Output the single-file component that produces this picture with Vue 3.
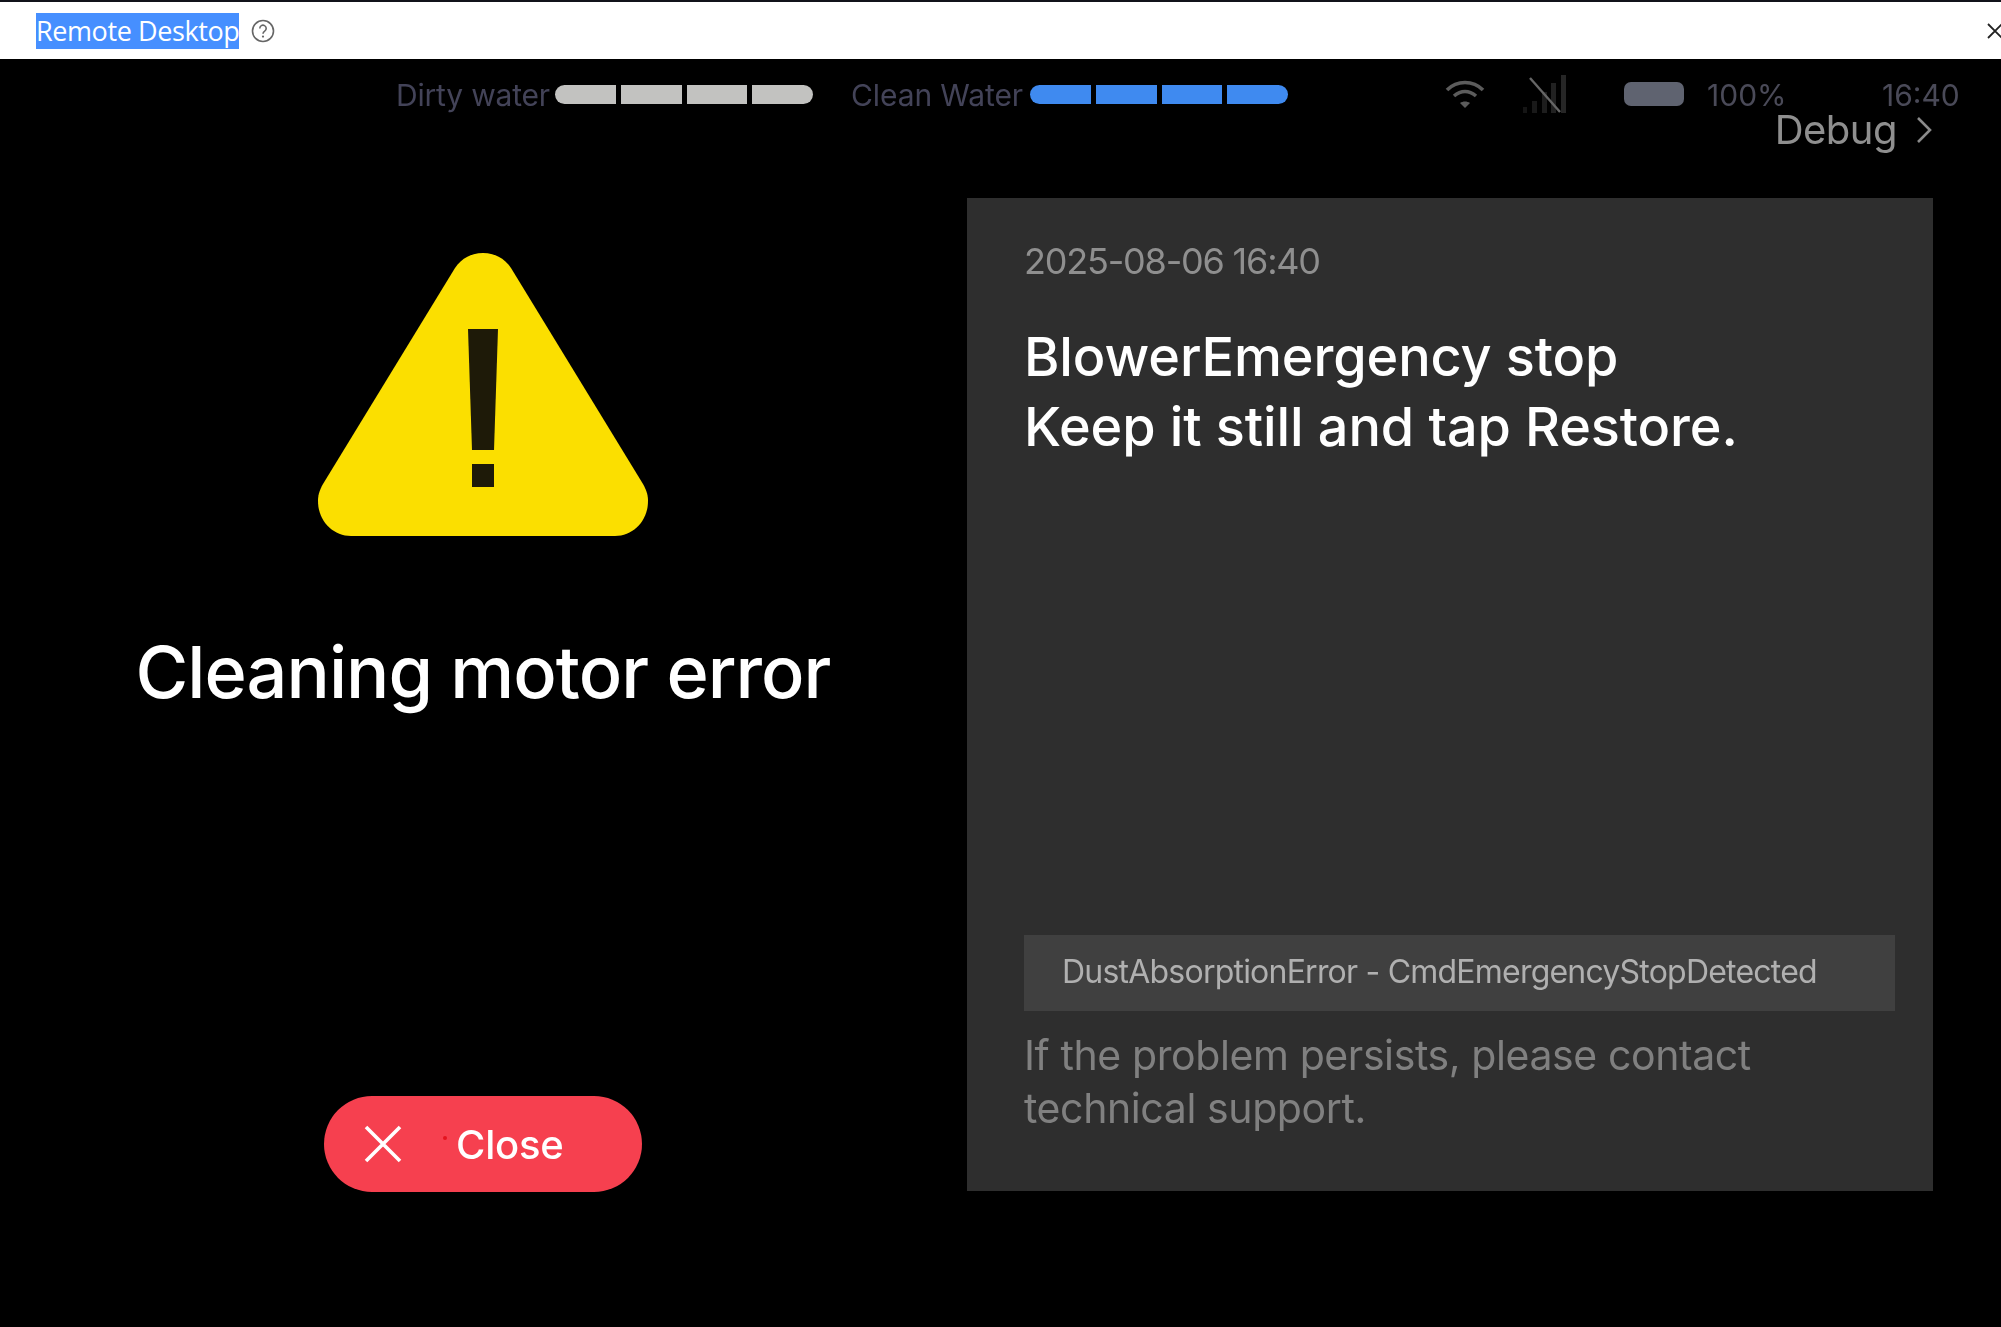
<script setup>
const dirty = [0, 1, 2, 3]
const clean = [0, 1, 2, 3]
</script>

<template>
  <div class="app">
    <header class="titlebar">
      <span class="title-text">Remote Desktop</span>
      <svg class="help" viewBox="0 0 24 24" fill="none">
        <circle cx="12" cy="12" r="10.5" stroke="#666" stroke-width="1.6" />
        <path d="M8.8 9.4a3.2 3.2 0 1 1 4.9 2.7c-1.1.7-1.7 1.3-1.7 2.6" stroke="#666" stroke-width="1.6" />
        <circle cx="12" cy="17.6" r="1.1" fill="#666" />
      </svg>
      <svg class="win-close" viewBox="0 0 16 16" fill="none">
        <path d="M1 1l14 14M15 1L1 15" stroke="#222" stroke-width="1.8" />
      </svg>
    </header>

    <main class="screen">
      <div class="status">
        <span class="tank-label dirty-label">Dirty water</span>
        <div class="tank">
          <i v-for="n in dirty" :key="n" class="seg seg-grey"></i>
        </div>
        <span class="tank-label clean-label">Clean Water</span>
        <div class="tank">
          <i v-for="n in clean" :key="n" class="seg seg-blue"></i>
        </div>
        <svg class="wifi" viewBox="0 0 40 28" fill="none">
          <path d="M2 10C12 0 28 0 38 10" stroke="#5c5c5c" stroke-width="3.6" />
          <path d="M9 16c7-6 15-6 22 0" stroke="#5c5c5c" stroke-width="3.6" />
          <path d="M15 23l5 5 5-5c-3-2-7-2-10 0z" fill="#5c5c5c" />
        </svg>
        <svg class="signal" viewBox="0 0 45 38" fill="none">
          <rect x="0" y="32" width="4" height="6" fill="#151515" />
          <rect x="9" y="26" width="5" height="12" fill="#191919" />
          <rect x="19" y="17" width="5" height="21" fill="#1d1d1d" />
          <rect x="28" y="8" width="5" height="30" fill="#212121" />
          <rect x="38" y="0" width="5" height="38" fill="#262626" />
          <path d="M7 3l30 34" stroke="#666" stroke-width="2.4" />
        </svg>
        <span class="battery"></span>
        <span class="percent">100%</span>
        <span class="clock">16:40</span>
      </div>

      <div class="debug-row">
        <span class="debug">Debug</span>
        <svg class="chev" viewBox="0 0 16 26" fill="none">
          <path d="M2 1l12 12L2 25" stroke="#8a8a8a" stroke-width="2.6" />
        </svg>
      </div>

      <div class="body">
        <section class="left">
          <svg class="warn" viewBox="0 0 330 283">
            <path d="M137 15C150-5 180-5 193 15L325 231C329 238 330 243 330 248C330 268 315 283 297 283L33 283C15 283 0 268 0 248C0 243 1 238 5 231Z" fill="#fbdf00" />
            <path d="M150 76H180L176 197H154Z" fill="#1e1a08" />
            <rect x="154" y="211" width="22" height="23" fill="#1e1a08" />
          </svg>
          <h1 class="err-title">Cleaning motor error</h1>
          <button class="close-btn">
            <svg class="x" viewBox="0 0 38 38" fill="none">
              <path d="M2 2l34 34M36 2L2 36" stroke="#fff" stroke-width="3.6" />
            </svg>
            <i class="dot"></i>
            <span class="close-label">Close</span>
          </button>
        </section>

        <section class="panel">
          <div class="date">2025-08-06 16:40</div>
          <p class="msg">BlowerEmergency stop<br />Keep it still and tap Restore.</p>
          <div class="code">DustAbsorptionError - CmdEmergencyStopDetected</div>
          <p class="hint">If the problem persists, please contact<br />technical support.</p>
        </section>
      </div>
    </main>
  </div>
</template>

<style>
html, body { margin: 0; background: #000; }
</style>

<style scoped>
.app {
  width: 2001px;
  height: 1327px;
  overflow: hidden;
  display: flex;
  flex-direction: column;
  font-family: Inter, "Liberation Sans", sans-serif;
  background: #000;
}
.titlebar {
  box-sizing: border-box;
  height: 59px;
  flex: none;
  background: #fff;
  border-top: 2px solid #11131a;
  display: flex;
  align-items: center;
  padding-left: 36px;
}
.title-text {
  background: #468fff;
  color: #fff;
  font-family: "Open Sans", sans-serif;
  font-size: 27px;
  line-height: 36px;
  height: 36px;
  width: 203px;
  white-space: nowrap;
  overflow: hidden;
  letter-spacing: -0.4px;
}
.help { width: 24px; height: 24px; margin-left: 12px; }
.win-close { width: 16px; height: 16px; margin-left: auto; margin-right: -1px; transform: translateX(1px); }

.screen { flex: 1; display: flex; flex-direction: column; min-height: 0; filter: blur(0.5px); }

.status {
  display: flex;
  align-items: center;
  height: 30px;
  margin-top: 20px;
  padding-left: 396px;
}
.tank-label {
  font-size: 30px;
  line-height: 30px;
  color: #434358;
  white-space: nowrap;
  padding-top: 2px;
}
.dirty-label { width: 159px; letter-spacing: -0.2px; }
.clean-label { width: 179px; margin-left: 38px; letter-spacing: -0.1px; }
.tank { display: flex; gap: 5px; width: 258px; height: 19px; }
.seg { flex: 1; }
.seg:first-child { border-radius: 10px 0 0 10px; }
.seg:last-child { border-radius: 0 10px 10px 0; }
.seg-grey { background: #c2c2c0; }
.seg-blue { background: #3f8af0; }
.wifi { width: 40px; height: 28px; margin-left: 157px; flex: none; }
.signal { width: 45px; height: 38px; margin-left: 38px; flex: none; }
.battery {
  width: 60px; height: 24px; margin-left: 56px; flex: none;
  background: #5f6370; border-radius: 7px;
}
.percent { font-size: 30px; line-height: 30px; color: #4a4a58; margin-left: 23px; width: 175px; flex: none; padding-top: 2px; }
.clock { font-size: 30px; line-height: 30px; color: #4a4a58; padding-top: 2px; }

.debug-row {
  height: 44px;
  margin-top: -1px;
  display: flex;
  align-items: center;
  justify-content: flex-end;
  padding-right: 69px;
}
.debug { font-size: 40px; line-height: 44px; color: #8f8f8f; letter-spacing: -0.5px; }
.chev { width: 16px; height: 26px; margin-left: 19px; }

.body {
  flex: none;
  display: grid;
  grid-template-columns: 966px 966px;
  column-gap: 1px;
  height: 993px;
  margin-top: 46px;
}
.left {
  display: flex;
  flex-direction: column;
  align-items: center;
  height: 994px;
}
.warn { width: 330px; height: 283px; margin-top: 55px; flex: none; }
.err-title {
  margin: 91px 0 0;
  font-size: 72px;
  line-height: 90px;
  font-weight: 500;
  color: #fff;
  white-space: nowrap;
  letter-spacing: -0.95px;
}
.close-btn {
  position: relative;
  margin-top: auto;
  width: 318px;
  height: 96px;
  border: 0;
  border-radius: 48px;
  background: #f6404f;
  display: flex;
  align-items: center;
  padding: 0 0 0 40px;
  font-family: inherit;
}
.x { width: 38px; height: 38px; flex: none; }
.dot {
  position: absolute;
  left: 119px; top: 40px;
  width: 4px; height: 4px;
  border-radius: 50%;
  background: #e4141f;
}
.close-label { margin-left: 54px; font-size: 40px; font-weight: 500; letter-spacing: -0.2px; color: #fff; }

.panel {
  box-sizing: border-box;
  background: #2e2e2e;
  padding: 40px 38px 0 57px;
  height: 993px;
  display: flex;
  flex-direction: column;
}
.date { font-size: 36px; line-height: 46px; color: #8f8f8f; letter-spacing: -1.2px; }
.msg {
  margin: 38px 0 0;
  font-size: 54px;
  line-height: 70px;
  font-weight: 500;
  color: #fff;
  letter-spacing: -0.1px;
  white-space: nowrap;
}
.code {
  margin-top: auto;
  height: 76px;
  box-sizing: border-box;
  background: #404040;
  padding-left: 38px;
  font-size: 32px;
  line-height: 74px;
  color: #b0b0b0;
  letter-spacing: -0.78px;
  white-space: nowrap;
}
.hint {
  margin: 18px 0 56px;
  font-size: 41px;
  line-height: 53px;
  color: #808080;
  letter-spacing: -0.4px;
  white-space: nowrap;
}
</style>
